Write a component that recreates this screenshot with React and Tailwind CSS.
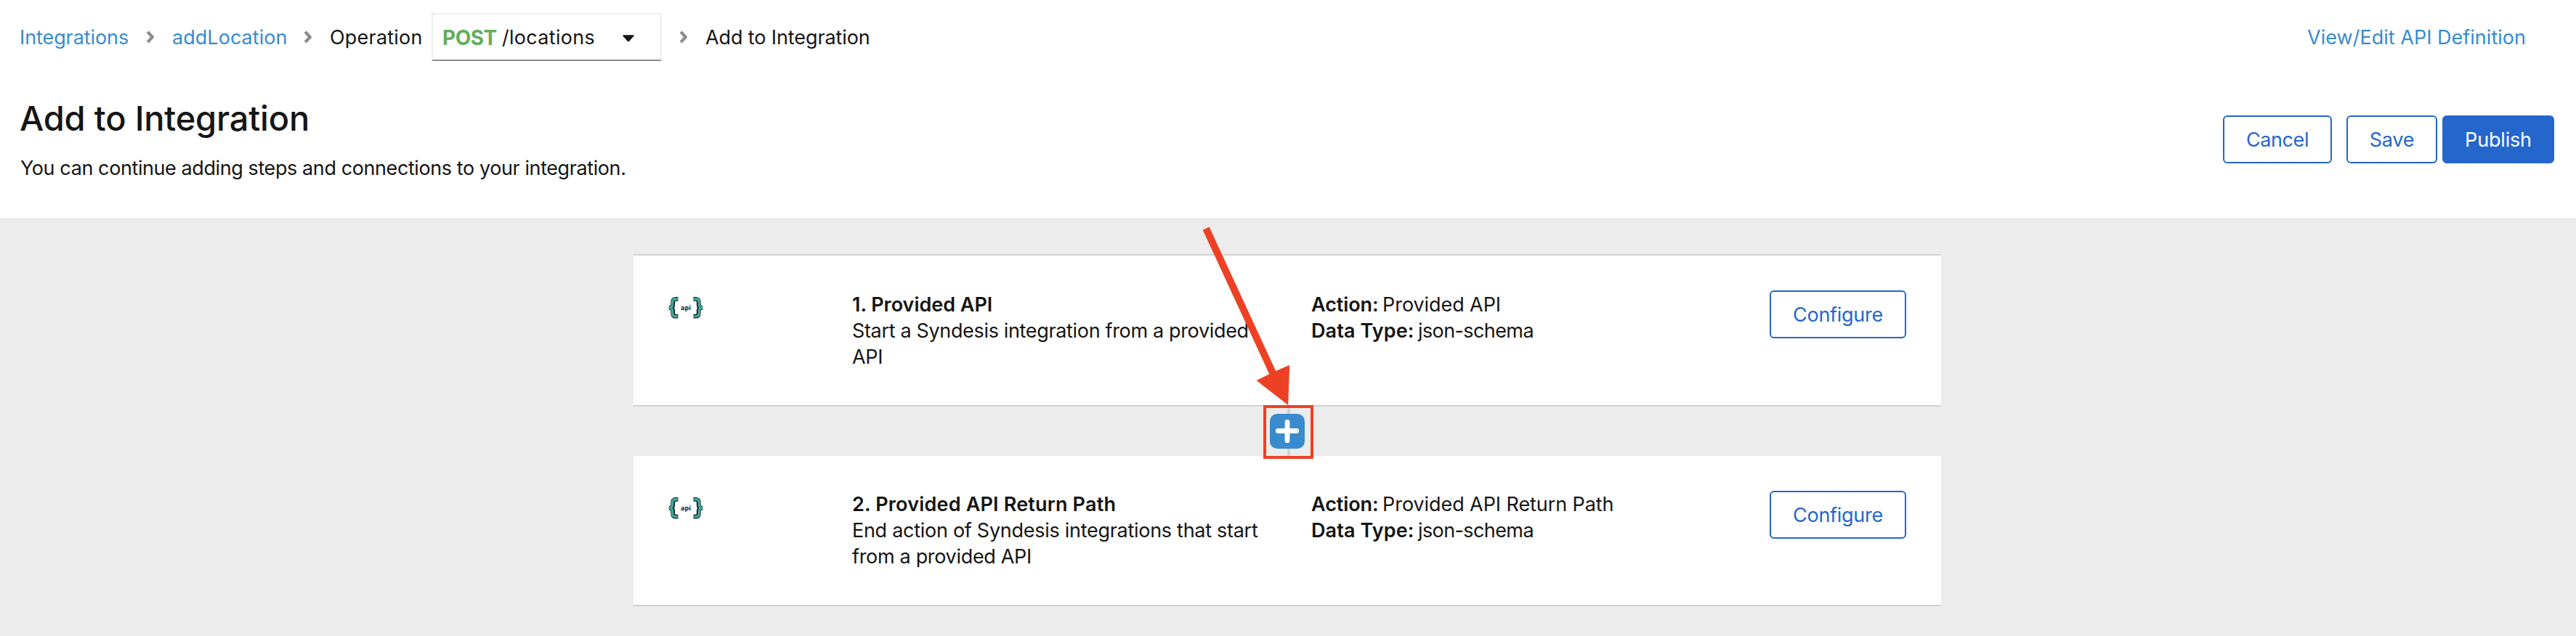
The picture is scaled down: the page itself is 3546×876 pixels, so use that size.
function Chevron() {
  return (
    <svg className="mr-6 h-[18px] w-3 shrink-0" viewBox="0 0 12 18" fill="none">
      <path d="M2.2 1.8 8.8 9 2.2 16.2" stroke="#8a8d90" strokeWidth="4.2" strokeLinejoin="round" />
    </svg>
  );
}

const BRACE =
  "M13.4 2.9H10.4Q6.2 2.9 6.2 6.8V10.6Q6.2 14.800 1 14.800Q6.2 14.800 6.2 19V22.800Q6.2 26.700 10.4 26.700H13.4";

function Brace({ flip }) {
  return (
    <g transform={flip ? "translate(48 0) scale(-1 1)" : undefined} fill="none">
      <path d={BRACE} stroke="#151515" strokeWidth="5.8" />
      <path d={BRACE} stroke="#3fa69b" strokeWidth="3.6" transform="translate(-0.6 0)" />
    </g>
  );
}

function ApiIcon() {
  return (
    <svg className="h-[30px] w-12" viewBox="0 0 48 30">
      <Brace />
      <Brace flip />
      <text x="24" y="18" textAnchor="middle" fontSize="9" fontWeight="700" fill="#151515" className="font-['Open_Sans',sans-serif]">
        api
      </text>
    </svg>
  );
}

function Button({ children, className }) {
  return (
    <button
      className={
        "flex h-[66px] items-center justify-center rounded-[6px] border-2 border-[#2466cc] pt-[2px] whitespace-nowrap " +
        className
      }
    >
      {children}
    </button>
  );
}

function Step({ className, textClass, title, lines, action }) {
  return (
    <section className={"flex w-[1800px] border-b-2 border-[#d2d2d2] bg-white pr-12 pl-12 " + className}>
      <div className="w-[253px] shrink-0 pt-[57px]">
        <ApiIcon />
      </div>
      <div className={"w-[632px] shrink-0 " + textClass}>
        <h2 className="font-semibold">{title}</h2>
        {lines}
      </div>
      <div className={"grow " + textClass}>
        <p>
          <b className="font-semibold tracking-[-0.09px]">Action:</b>{" "}
          <span className="-ml-[2px] tracking-[-0.08px]">{action}</span>
        </p>
        <p>
          <b className="font-semibold tracking-[0.1px]">Data Type:</b>{" "}
          <span className="-ml-[2px] tracking-[-0.6px]">json-schema</span>
        </p>
      </div>
      <Button className="mt-12 w-[188px] text-[#2466cc] tracking-[-0.27px]">Configure</Button>
    </section>
  );
}

export default function App() {
  return (
    <div className="relative h-[876px] w-[3546px] overflow-hidden bg-[#ececec] font-['Inter',sans-serif] text-[27px] leading-9 text-[#151515]">
      <header className="h-[300px] bg-white">
        <nav className="flex h-[102px] items-center pl-[27px] whitespace-nowrap">
          <a className="w-[174px] pt-[2px] tracking-[-0.09px] text-[#398bce]">Integrations</a>
          <Chevron />
          <a className="w-[181px] pt-[2px] tracking-[0.04px] text-[#398bce]">addLocation</a>
          <Chevron />
          <span className="w-[140px] pt-[2px] tracking-[0.21px]">Operation</span>
          <div className="mr-6 flex h-[66px] w-[317px] items-center border-2 border-[#ededed] border-b-[#8a8d90] pl-[13px]">
            <b className="w-[82px] pt-px text-[28px] font-bold tracking-[-0.5px] text-[#61af5a]">POST</b>
            <span className="w-[166px] pt-[2px] tracking-[0.29px]">/locations</span>
            <svg className="mt-[3px] h-[10px] w-4" viewBox="0 0 16 10">
              <path d="M1 0.3H15Q16.3 0.4 15.4 1.7L9 9Q8 9.9 7 9L0.6 1.7Q-0.3 0.4 1 0.3Z" fill="#151515" />
            </svg>
          </div>
          <Chevron />
          <span className="pt-[2px] tracking-[-0.11px]">Add to Integration</span>
          <a className="mr-[69px] ml-auto pt-[2px] tracking-[0.02px] text-[#398bce]">View/Edit API Definition</a>
        </nav>
        <div className="flex justify-between pr-[30px] pl-[27px]">
          <div className="pt-[31px]">
            <h1 className="text-[47px] leading-[60px] font-medium tracking-[-0.2px]">Add to Integration</h1>
            <p className="mt-[21px] pl-px tracking-[-0.41px]">
              You can continue adding steps and connections to your integration.
            </p>
          </div>
          <div className="flex pt-[57px]">
            <Button className="mr-5 w-[150px] text-[#2466cc] tracking-[-0.4px]">Cancel</Button>
            <Button className="mr-[7px] w-[125px] text-[#2466cc] tracking-[-0.25px]">Save</Button>
            <Button className="w-[154px] bg-[#2466cc] text-white tracking-[-0.18px]">Publish</Button>
          </div>
        </div>
      </header>

      <main className="flex flex-col pt-[50px] pl-[872px]">
        <Step
          className="h-[210px] border-t-2"
          textClass="pt-[50px]"
          title={<span className="tracking-[-0.03px]">1. Provided API</span>}
          lines={
            <>
              <p className="tracking-[-0.34px]">Start a Syndesis integration from a provided</p>
              <p className="tracking-[-0.3px]">API</p>
            </>
          }
          action="Provided API"
        />
        <div className="relative flex h-[68px] w-[1800px] pt-[10px] pl-[876px]">
          <div className="absolute top-0 left-[900px] h-[72px] w-1 bg-[#d2d2d2]" />
          <svg className="relative h-12 w-12" viewBox="0 0 48 48">
            <rect width="48" height="48" rx="10" fill="#398bce" />
            <path d="M24 11.3V36.7M11.3 23.5H36.7" stroke="#fff" strokeWidth="6.8" strokeLinecap="round" />
          </svg>
          <div className="absolute -top-[2px] left-[867px] h-[74px] w-[69px] border-4 border-[#ed4125]" />
        </div>
        <Step
          className="h-[207px]"
          textClass="pt-[49px]"
          title={<span className="tracking-[0.18px]">2. Provided API Return Path</span>}
          lines={
            <>
              <p className="tracking-[-0.28px]">End action of Syndesis integrations that start</p>
              <p className="tracking-[-0.32px]">from a provided API</p>
            </>
          }
          action="Provided API Return Path"
        />
      </main>

      <svg className="absolute top-[310px] left-[1650px] h-[250px] w-[130px]" viewBox="1650 310 130 250">
        <path d="M1655.7 316.7 1664.6 312.5 1756.2 511 1775.2 502.8 1773.2 558 1729.5 524 1747.3 515.3Z" fill="#ed4125" />
      </svg>
    </div>
  );
}
